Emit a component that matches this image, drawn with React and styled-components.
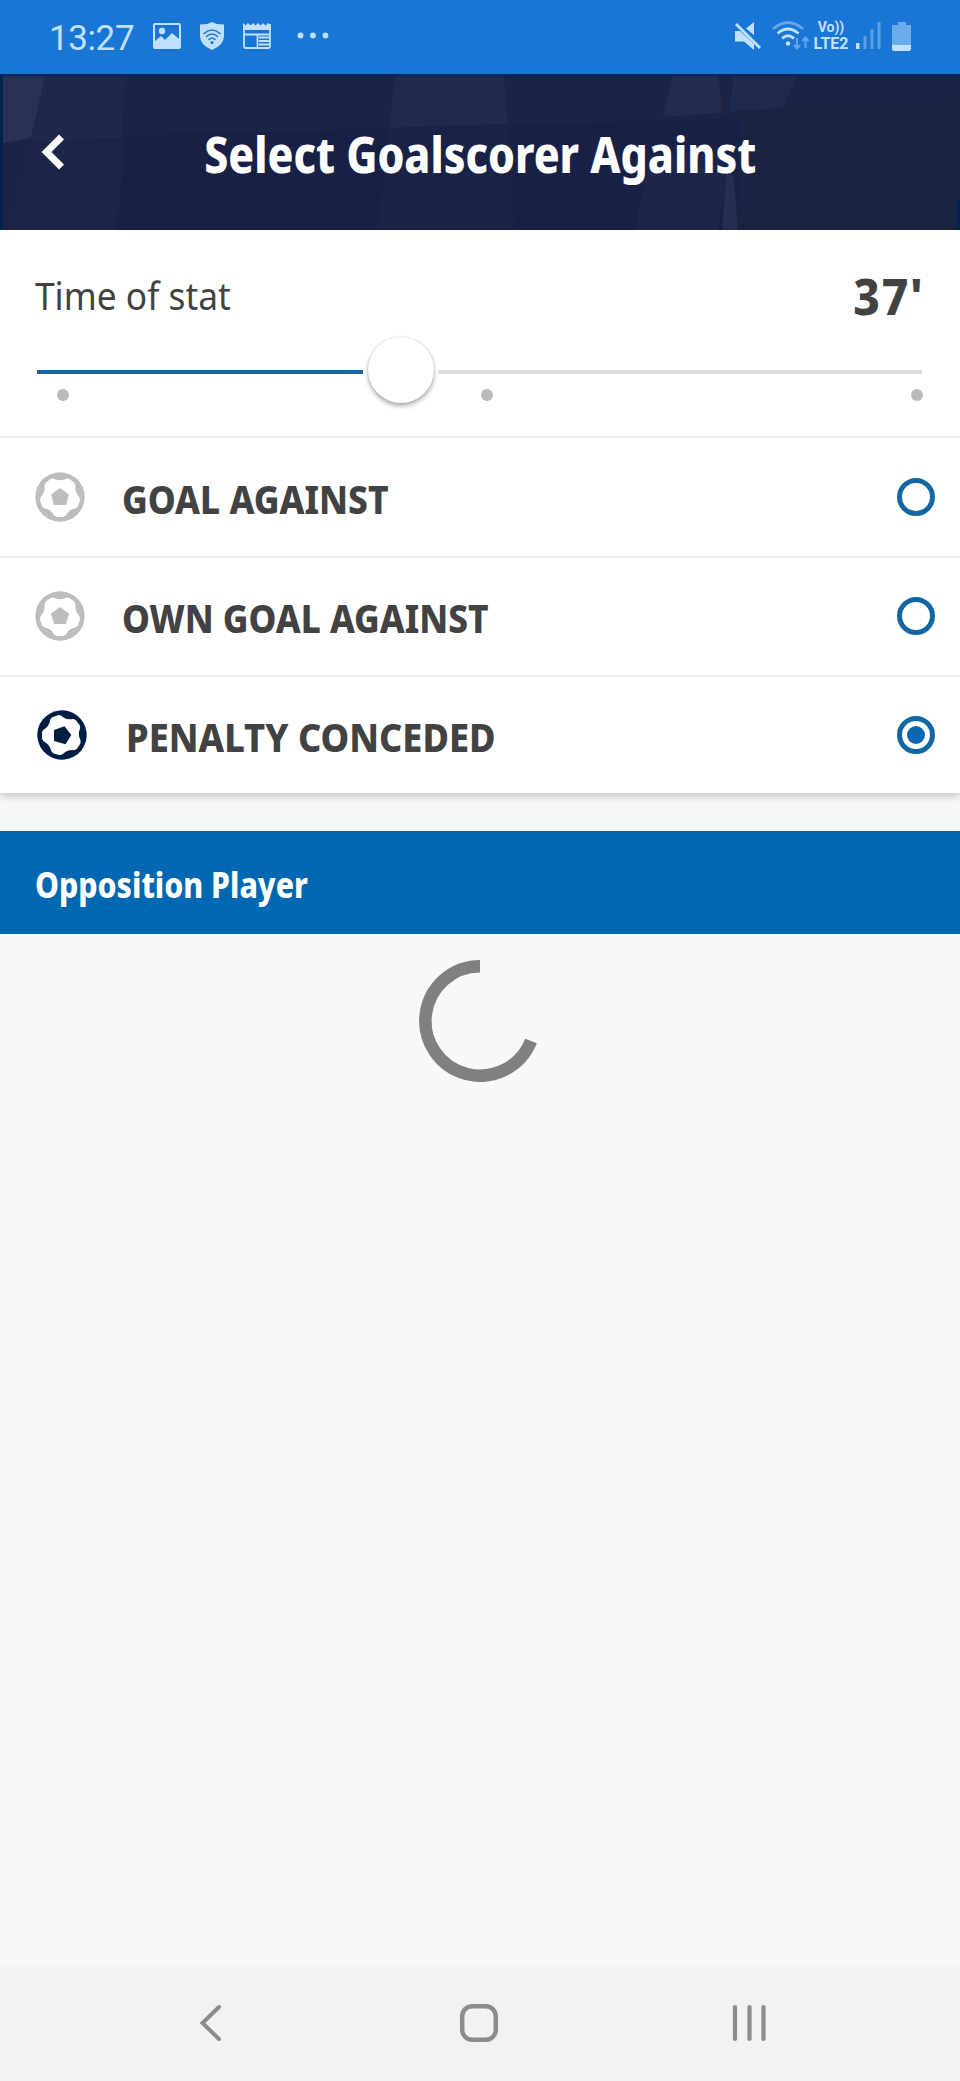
import React from 'react';
import styled, { createGlobalStyle } from 'styled-components';

const GlobalStyle = createGlobalStyle`
    body {
        margin: 0;
        background: #f8f8f8;
        font-family: "Noto Sans", "Open Sans", sans-serif;
        color: #424242;
    }
`;
const Screen = styled.div`
    display: flex;
    flex-direction: column;
    width: 960px;
    height: 2081px;
    overflow: hidden;
`;
const Label = styled.span`
    display: inline-block;
    white-space: nowrap;
    font-size: ${(p) => p.$size}px;
    font-weight: ${(p) => p.$weight || 800};
    line-height: 1;
    letter-spacing: ${(p) => p.$spacing || 0}px;
    padding-top: ${(p) => p.$drop || 0}px;
    transform: scaleX(${(p) => p.$stretch || 1});
    transform-origin: ${(p) => p.$origin || 'left'} center;
`;
const StatusBar = styled.div`
    display: flex;
    justify-content: space-between;
    box-sizing: border-box;
    flex: none;
    height: 74px;
    padding: 0 48px 2px 49px;
    background: #1976d5;
    color: #bfe0ff;
`;
const StatusGroup = styled.div`
    display: flex;
    align-items: center;
    gap: ${(p) => p.$gap}px;
`;
const Clock = styled.div`
    width: 85px;
    padding-top: 4px;
    font: 400 35px/1 Roboto, sans-serif;
    letter-spacing: -0.4px;
`;
const Network = styled.div`
    display: flex;
    flex-direction: column;
    align-items: center;
    width: 38px;
    margin: 0 6px 0 2px;
    font: 700 16px/18px Roboto, sans-serif;
    white-space: nowrap;
    span:first-child {
        font-size: 14px;
        line-height: 16px;
    }
`;
const Header = styled.header`
    display: grid;
    flex: none;
    height: 156px;
    > * {
        grid-area: 1 / 1;
    }
`;
const HeaderBar = styled.div`
    display: grid;
    grid-template-columns: 106px 1fr 106px;
    align-items: center;
    justify-items: center;
    z-index: 1;
    color: #fff;
`;
const Card = styled.section`
    flex: none;
    background: #fff;
    box-shadow: 0 3px 8px rgba(0, 0, 0, 0.22);
`;
const TimePanel = styled.div`
    height: 206px;
    box-sizing: border-box;
    padding: 41px 37px 0 35px;
`;
const TimeHead = styled.div`
    display: flex;
    justify-content: space-between;
    height: 66px;
    margin-right: -2px;
`;
const Slider = styled.div`
    display: flex;
    align-items: center;
    height: 66px;
    margin: 0 1px 0 2px;
`;
const Track = styled.div`
    height: 4px;
    margin-top: 3px;
    flex: ${(p) => (p.$filled ? '0 0 326px' : 1)};
    background: ${(p) => (p.$filled ? '#1c66a0' : '#dcdcdc')};
`;
const Thumb = styled.div`
    width: 66px;
    height: 66px;
    flex: none;
    margin: 0 4px 0 5px;
    border-radius: 50%;
    background: #fff;
    box-shadow: 0 3px 5px rgba(0, 0, 0, 0.32), 0 0 2px rgba(0, 0, 0, 0.16);
`;
const Ticks = styled.div`
    display: grid;
    grid-template-columns: 424px 430px 12px;
    margin: -14px 0 0 22px;
`;
const Tick = styled.i`
    width: 12px;
    height: 12px;
    border-radius: 50%;
    background: #bababa;
`;
const Row = styled.div`
    display: flex;
    align-items: center;
    box-sizing: border-box;
    height: ${(p) => p.$height}px;
    padding: 0 25px 1px ${(p) => (p.$selected ? 37 : 35)}px;
    border-top: 2px solid #ededed;
    svg {
        flex: none;
        margin-right: ${(p) => (p.$selected ? 39 : 37)}px;
    }
`;
const Radio = styled.div`
    display: grid;
    place-items: center;
    box-sizing: border-box;
    width: 38px;
    height: 38px;
    margin-left: auto;
    border: 5px solid #1467a4;
    border-radius: 50%;
    &::after {
        content: '';
        width: 18px;
        height: 18px;
        border-radius: 50%;
        background: ${(p) => (p.$selected ? '#0a68b2' : 'transparent')};
    }
`;
const SectionTitle = styled.div`
    display: flex;
    align-items: center;
    flex: none;
    box-sizing: border-box;
    height: 103px;
    margin-top: 38px;
    padding: 4px 35px 0;
    background: #0067b3;
    color: #fff;
`;
const Body = styled.main`
    display: flex;
    justify-content: center;
    align-items: flex-start;
    flex: 1;
    padding-top: 26px;
`;
const NavBar = styled.nav`
    display: flex;
    justify-content: space-between;
    align-items: center;
    flex: none;
    box-sizing: border-box;
    height: 114px;
    padding: 0 191px 2px 197px;
    background: #f2f2f2;
`;

const options = [
    {label: 'GOAL AGAINST', stretch: 0.905, height: 120},
    {label: 'OWN GOAL AGAINST', stretch: 0.902, height: 119},
    {label: 'PENALTY CONCEDED', stretch: 0.928, height: 118, selected: true}
];

const Backdrop = () => (
    <svg width="960" height="156" viewBox="0 0 960 156">
        <rect width="960" height="156" fill="#1a2444" />
        <path d="M126 62 960 38V156H118Z" fill="#182145" />
        <path d="M0 0H46L31 64 0 70Z" fill="#2b3055" />
        <path d="M46 0H126L121 64 31 68Z" fill="#1f284b" />
        <path d="M31 68H121L116 156H9Z" fill="#1c2546" />
        <path d="M395 0H504L508 50 389 54Z" fill="#21294c" />
        <path d="M389 54 508 50 516 156H377Z" fill="#1a2345" />
        <path d="M673 0H718L722 39 663 43Z" fill="#242b4f" />
        <path d="M735 0H798L782 35 731 37Z" fill="#20294b" />
        <path d="M650 80H730L718 156H635Z" fill="#1c264a" />
        <path d="M740 36 960 28V156H738Z" fill="#1a2442" />
        <path d="M727 90 734 105 738 156H722Z" fill="#272e52" />
        <path d="M735 0 731 37" stroke="#172f5c" strokeWidth="2" />
        <path d="M0 0H3V156H0ZM957 125H960V156H957Z" fill="#00234e" />
        <path d="M0 1H960" stroke="#06285a" strokeWidth="3" />
    </svg>
);

const PictureIcon = () => (
    <svg width="28" height="26" viewBox="0 0 28 26" fill="currentColor">
        <path fillRule="evenodd" d="M2 0H26Q28 0 28 2V24Q28 26 26 26H2Q0 26 0 24V2Q0 0 2 0ZM2 2V18L8 13 12 17 19 10 26 16V2Z" />
        <circle cx="9" cy="8" r="3.200" />
    </svg>
);

const ShieldIcon = () => (
    <svg width="24" height="28" viewBox="0 0 24 28" fill="none" stroke="#1976d5" strokeWidth="1.600" strokeLinecap="round">
        <path d="M12 0Q16 2.500 24 2.500V14Q24 23 12 28 0 23 0 14V2.500Q8 2.500 12 0Z" fill="currentColor" stroke="none" />
        <path d="M4 11.500Q12 4.500 20 11.500M6.500 14.500Q12 9.500 17.500 14.500M9 17.500Q12 14.500 15 17.500" />
        <circle cx="12" cy="20.500" r="1.500" fill="#1976d5" stroke="none" />
    </svg>
);

const NewsIcon = () => (
    <svg width="28" height="26" viewBox="0 0 28 26" fill="none" stroke="currentColor" strokeWidth="1.800">
        <path d="M1 1V23.500Q1 25 2.500 25H25.500Q27 25 27 23.500V1" />
        <path d="M0 0 2.500 2.500 5 0 7.500 2.500 10 0 12.500 2.500 15 0 17.500 2.500 20 0 22.500 2.500 25 0 28 2V7H0Z" fill="currentColor" stroke="none" />
        <path d="M1 11.500H27M14.500 11.500V25M16 14.500H26M16 18H26M16 21.500H26" />
    </svg>
);

const MoreIcon = () => (
    <svg width="40" height="8" viewBox="-7 0 40 8" fill="currentColor">
        <circle cx="3.500" cy="3.500" r="2.900" />
        <circle cx="16" cy="3.500" r="2.900" />
        <circle cx="28.500" cy="3.500" r="2.900" />
    </svg>
);

const MuteIcon = () => (
    <svg width="26" height="28" viewBox="0 0 26 28" fill="currentColor">
        <path d="M19 0V13L11 6.500ZM0 9H5L19 22V28L9 19.500H0Z" />
        <path d="M1 2 25 26" stroke="currentColor" strokeWidth="2.800" />
    </svg>
);

const WifiIcon = () => (
    <svg width="38" height="30" viewBox="0 0 38 30" fill="none" stroke="currentColor" strokeWidth="2.800">
        <path d="M1 8Q16-5 31 8" opacity="0.45" />
        <path d="M5.500 12.500Q16 3.500 26.500 12.500M10 17.500Q16 12 22 17.500" />
        <circle cx="16" cy="22.500" r="2.200" fill="currentColor" stroke="none" />
        <path d="M25 17V27M22 24 25 27.500 28 24M33.500 27V17M30.500 20 33.500 16.500 36.500 20" strokeWidth="2" opacity="0.45" />
    </svg>
);

const SignalIcon = () => (
    <svg width="25" height="28" viewBox="0 0 25 28" fill="currentColor">
        <path d="M0 21H3.500V27H0Z" />
        <path d="M7.500 14H10.500V27H7.500ZM14.500 7H17.500V27H14.500ZM21.500 0H24.500V27H21.500Z" opacity="0.4" />
    </svg>
);

const BatteryIcon = () => (
    <svg width="20" height="29" viewBox="0 0 20 29" fill="currentColor">
        <path d="M6 0H14V3H19V23H0V3H6Z" opacity="0.5" />
        <path d="M0 23H19V27Q19 29 17 29H2Q0 29 0 27Z" />
    </svg>
);

const polar = (r, deg) => {
    const a = deg * Math.PI / 180;
    return `${(r * Math.cos(a)).toFixed(2)} ${(r * Math.sin(a)).toFixed(2)}`;
};

// white part of the ball: five lobes with a scallop between each pair
const lobes = [0, 1, 2, 3, 4].map((i) => {
    const dip = -90 + i * 72;
    return `${i ? 'L' : 'M'}${polar(19.5, dip - 27)}L${polar(18.8, dip - 20)}Q${polar(14.5, dip)} ${polar(18.8, dip + 20)}L${polar(19.5, dip + 27)}`;
}).join('') + 'Z';

const Ball = ({selected}) => (
    <svg width="50" height="50" viewBox="-25 -25 50 50">
        <g fill={selected ? '#021d42' : '#bdbdbd'} transform={selected ? 'rotate(16)' : undefined}>
            <circle r="24.700" />
            <path d={lobes} fill="#fff" stroke="#fff" strokeWidth="1.500" strokeLinejoin="round" />
            <path d="M0-9 9-2.500 6 8H-6L-9-2.500Z" />
        </g>
    </svg>
);

export default class App extends React.Component {
    render() {
        return (
            <Screen>
                <GlobalStyle />
                <StatusBar>
                    <StatusGroup $gap={19}>
                        <Clock>13:27</Clock>
                        <PictureIcon />
                        <ShieldIcon />
                        <NewsIcon />
                        <MoreIcon />
                    </StatusGroup>
                    <StatusGroup $gap={0}>
                        <StatusGroup $gap={11}>
                            <MuteIcon />
                            <WifiIcon />
                        </StatusGroup>
                        <Network>
                            <span>Vo))</span>
                            <span>LTE2</span>
                        </Network>
                        <StatusGroup $gap={11}>
                            <SignalIcon />
                            <BatteryIcon />
                        </StatusGroup>
                    </StatusGroup>
                </StatusBar>
                <Header>
                    <Backdrop />
                    <HeaderBar>
                        <svg width="26" height="36" viewBox="0 0 26 36" fill="none" stroke="#fff" strokeWidth="7">
                            <path d="M21.500 3 6.500 18 21.500 33" />
                        </svg>
                        <Label $size={49} $stretch={0.873} $drop={5} $origin="center">Select Goalscorer Against</Label>
                    </HeaderBar>
                </Header>
                <Card>
                    <TimePanel>
                        <TimeHead>
                            <Label $size={39} $weight={400} $stretch={0.905} $drop={4}>Time of stat</Label>
                            <Label $size={50} $stretch={0.92} $spacing={2} $origin="right">37'</Label>
                        </TimeHead>
                        <Slider>
                            <Track $filled />
                            <Thumb />
                            <Track />
                        </Slider>
                        <Ticks>
                            <Tick />
                            <Tick />
                            <Tick />
                        </Ticks>
                    </TimePanel>
                    {
                        options.map(({label, stretch, height, selected}) => (
                            <Row key={label} $height={height} $selected={selected}>
                                <Ball selected={selected} />
                                <Label $size={39} $stretch={stretch} $drop={3}>{label}</Label>
                                <Radio $selected={selected} />
                            </Row>
                        ))
                    }
                </Card>
                <SectionTitle>
                    <Label $size={35} $stretch={0.864}>Opposition Player</Label>
                </SectionTitle>
                <Body>
                    <svg width="122" height="122" viewBox="-61 -61 122 122" fill="none" stroke="#808080" strokeWidth="12.500">
                        <path d="M0-54.700A54.700 54.700 0 1 0 51 20" />
                    </svg>
                </Body>
                <NavBar>
                    <svg width="26" height="40" viewBox="0 0 26 40" fill="none" stroke="#8c8c8c" strokeWidth="4" strokeLinecap="round">
                        <path d="M22 4 5.500 20 22 36" />
                    </svg>
                    <svg width="42" height="40" viewBox="-3 0 42 40" fill="none" stroke="#8c8c8c" strokeWidth="4.500">
                        <rect x="3.200" y="3.200" width="33.600" height="33.600" rx="10" />
                    </svg>
                    <svg width="38" height="40" viewBox="0 0 38 40" fill="none" stroke="#8c8c8c" strokeWidth="4.200" strokeLinecap="round">
                        <path d="M4 4V36M18.500 4V36M32.500 4V36" />
                    </svg>
                </NavBar>
            </Screen>
        );
    }
}
